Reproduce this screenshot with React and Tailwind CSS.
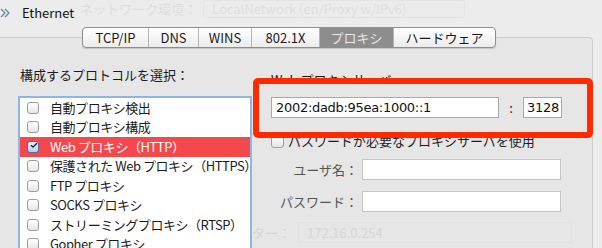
import { Check } from "lucide-react";

const tabs = [
  { label: "TCP/IP", w: "w-[65px]" },
  { label: "DNS", w: "w-[50px]" },
  { label: "WINS", w: "w-[53px]" },
  { label: "802.1X", w: "w-[68px]" },
  { label: "プロキシ", w: "w-[74px]", active: true },
  { label: "ハードウェア", w: "w-[102px]" },
];

const protocols = [
  { label: "自動プロキシ検出" },
  { label: "自動プロキシ構成" },
  { label: "Web プロキシ（HTTP）", checked: true },
  { label: "保護された Web プロキシ（HTTPS）" },
  { label: "FTP プロキシ" },
  { label: "SOCKS プロキシ" },
  { label: "ストリーミングプロキシ（RTSP）" },
  { label: "Gopher プロキシ" },
];

function Box({ checked }) {
  return (
    <span
      className={
        "flex w-[12px] h-[12px] shrink-0 items-center justify-center rounded-[3px] border " +
        (checked
          ? "border-[#5b6f93] bg-gradient-to-b from-[#eaf2ff] to-[#b7cdf2]"
          : "border-[#9c9c9c] bg-gradient-to-b from-white to-[#e6e6e6]")
      }
    >
      {checked && <Check size={13} strokeWidth={3.5} className="text-[#111] -mt-[3px] ml-[2px]" />}
    </span>
  );
}

export default function App() {
  return (
    <div className="relative w-[602px] h-[248px] overflow-hidden bg-[#ececec] text-[13px] text-[#1c1c1c] font-['Noto_Sans_CJK_JP','Liberation_Sans',sans-serif]">
      {/* ghost of the previous screen */}
      <div className="absolute left-[80px] top-[0px] flex items-center gap-[6px] text-[#dedede]">
        <span className="leading-[16px]">ネットワーク環境：</span>
        <span className="w-[262px] h-[18px] border border-[#e4e4e4] rounded-[3px] pl-[8px] leading-[16px]">LocalNetwork (en/Proxy w/IPv6)</span>
      </div>

      {/* header */}
      <div className="flex h-[26px] items-center gap-[8px]">
        <svg width="14" height="10" viewBox="0 0 14 10">
          <path d="M1 1 L5 5 L1 9 M5 1 L9 5 L5 9" fill="none" stroke="#6a7fa8" strokeWidth="1.2" />
        </svg>
        <span className="leading-[16px] text-[#111]">Ethernet</span>
      </div>

      {/* tabs */}
      <div className="relative z-10 ml-[82px] mt-[1px] flex h-[21px] w-fit rounded-[4px] border border-[#8e8e8e] bg-gradient-to-b from-white to-[#ececec] shadow-[0_1px_1px_rgba(0,0,0,0.15)] overflow-hidden">
        {tabs.map((t, i) => (
          <div
            key={t.label}
            className={
              t.w +
              " flex items-center justify-center leading-[16px] " +
              (i > 0 ? "border-l border-[#b5b5b5] " : "") +
              (t.active ? "bg-[#8d8d8d] text-[#e6e6e6]" : "text-[#1a1a1a]")
            }
          >
            {t.label}
          </div>
        ))}
      </div>

      {/* panel */}
      <div className="-mt-[11px] -ml-[2px] w-[595px] h-[240px] rounded-tr-[4px] border border-[#cdcdcd] bg-[#e6e6e6] flex">
        <div className="ml-[19px] pt-[29px] flex flex-col">
          <div className="leading-[16px] pl-[2px] text-[#1a1a1a] whitespace-nowrap">構成するプロトコルを選択：</div>
          <div className="mt-[13px] w-[234px] h-[160px] bg-white border-[2px] border-[#8fb4e6] overflow-hidden">
            {protocols.map((p) => (
              <div
                key={p.label}
                className={
                  "flex h-[19.5px] items-center gap-[11px] pl-[7px] leading-[16px] whitespace-nowrap tracking-[-0.45px] " +
                  (p.checked ? "bg-[#f5484d] text-white" : "text-[#1c1c1c]")
                }
              >
                <Box checked={p.checked} />
                <span>{p.label}</span>
              </div>
            ))}
          </div>
        </div>

        <div className="ml-[19px] pt-[34px] flex flex-col">
          <div className="h-[11px] overflow-hidden leading-[16px] text-[#1a1a1a] whitespace-nowrap">Web プロキシサーバ</div>
          <div className="mt-[14px] flex items-center">
            <div className="w-[228px] h-[21px] border border-[#a8a8a8] bg-white pl-[4px] leading-[19px] font-['DejaVu_Sans',sans-serif] text-[13px] tracking-[-0.3px] text-[#111]">
              2002:dadb:95ea:1000::1
            </div>
            <span className="w-[24px] text-center leading-[16px]">:</span>
            <div className="w-[39px] h-[21px] border border-[#a8a8a8] bg-white pl-[3px] leading-[19px] font-['DejaVu_Sans',sans-serif] text-[13px] tracking-[-0.3px] text-[#111]">
              3128
            </div>
          </div>
          <div className="mt-[15px] flex items-center gap-[4px]">
            <span className="w-[13px] h-[13px] rounded-[3px] border border-[#9c9c9c] bg-gradient-to-b from-white to-[#e6e6e6]" />
            <span className="leading-[16px] whitespace-nowrap">パスワードが必要なプロキシサーバを使用</span>
          </div>
          <div className="mt-[10px] ml-[-90px] flex flex-col gap-[11px]">
            <div className="flex items-center">
              <span className="w-[181px] text-right pr-[4px] leading-[16px] text-[#555]">ユーザ名：</span>
              <div className="w-[199px] h-[21px] border border-[#c4c4c4] bg-white" />
            </div>
            <div className="flex items-center">
              <span className="w-[181px] text-right pr-[4px] leading-[16px] text-[#555]">パスワード：</span>
              <div className="w-[199px] h-[21px] border border-[#c4c4c4] bg-white" />
            </div>
          </div>
          <div className="mt-[10px] ml-[-19px] flex items-center text-[#d6d6d6]">
            <span className="w-[36px] leading-[16px] whitespace-nowrap">ター：</span>
            <span className="ml-[10px] w-[274px] h-[21px] border border-[#e0e0e0] pl-[8px] leading-[19px]">172.16.0.254</span>
          </div>
        </div>
      </div>

      {/* annotation */}
      <div className="absolute left-[253px] top-[78px] w-[340px] h-[60px] border-[6px] border-[#ff2a00] rounded-[5px]" />
    </div>
  );
}
